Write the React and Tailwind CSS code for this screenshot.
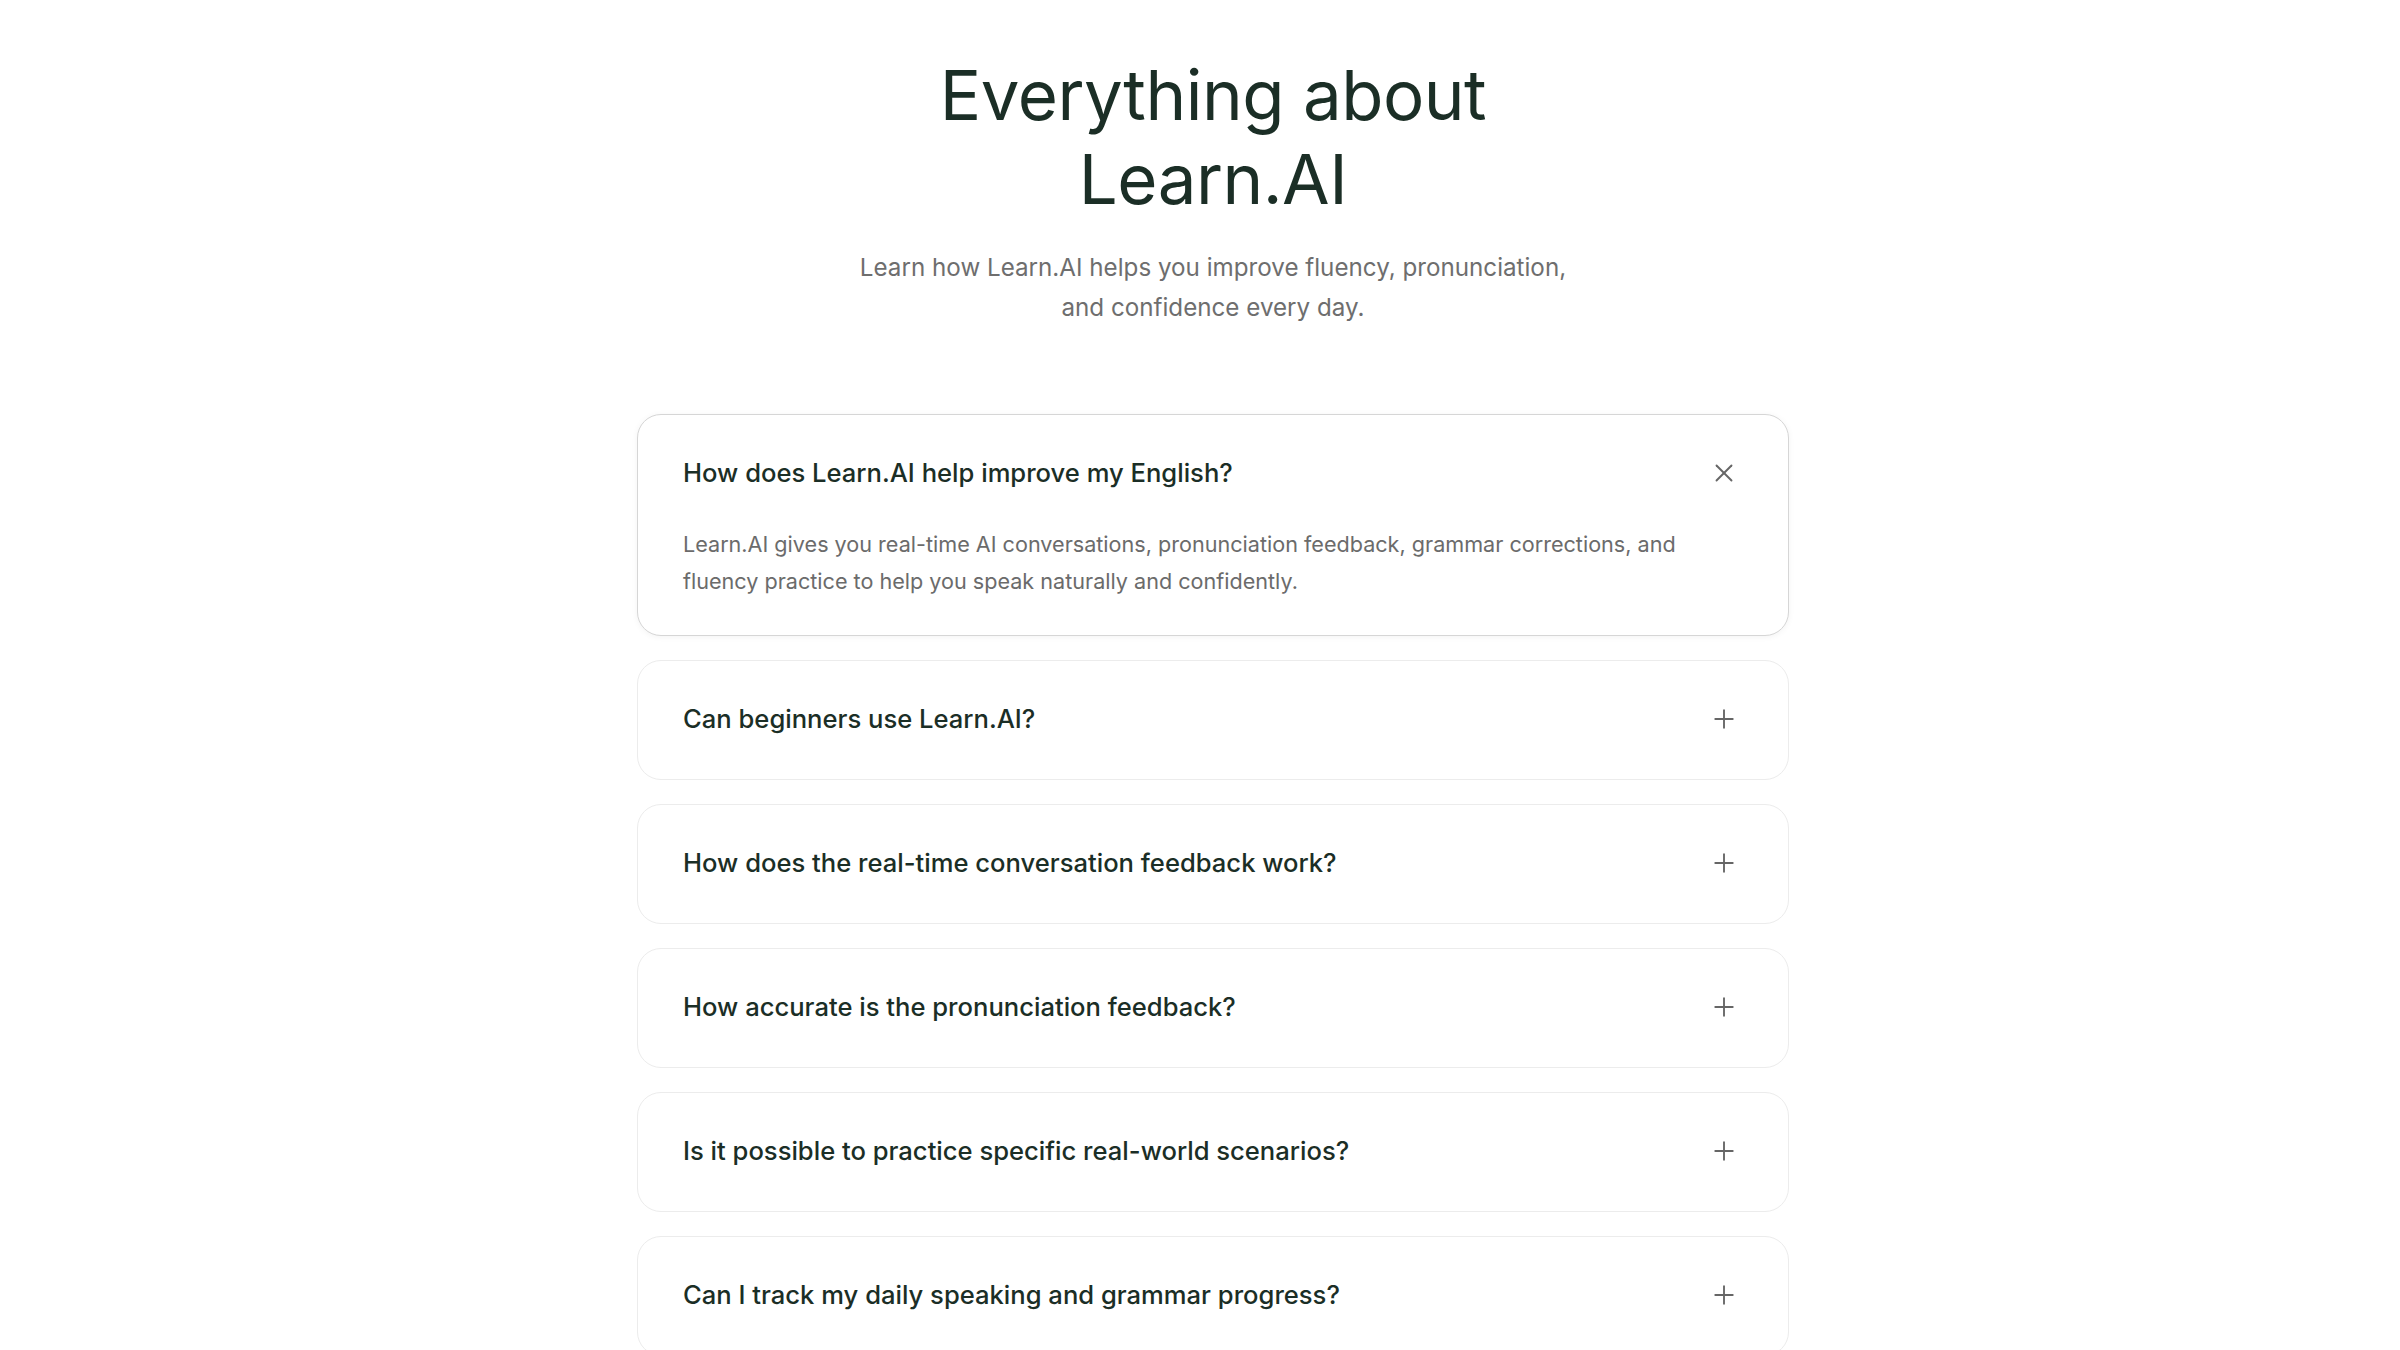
import { Plus, X } from "lucide-react";

const faqs = [
  {
    q: "How does Learn.AI help improve my English?",
    a: "Learn.AI gives you real-time AI conversations, pronunciation feedback, grammar corrections, and fluency practice to help you speak naturally and confidently.",
  },
  { q: "Can beginners use Learn.AI?" },
  { q: "How does the real-time conversation feedback work?" },
  { q: "How accurate is the pronunciation feedback?" },
  { q: "Is it possible to practice specific real-world scenarios?" },
  { q: "Can I track my daily speaking and grammar progress?" },
];

function FaqItem({ item, open }) {
  return (
    <div
      className={
        open
          ? "w-full rounded-[24px] border border-[#d6d6d6] bg-white shadow-[0_1px_6px_rgba(0,0,0,0.05)] pl-[45px] pr-[49px] pt-[41px] pb-[35px]"
          : "w-full rounded-[24px] border border-[#ececec] bg-white pl-[45px] pr-[49px] pt-[41px] pb-[43px]"
      }
    >
      <div className="flex items-center justify-between">
        <h3 className="text-[25.6px] leading-[34px] font-medium text-[#1b2e26]">{item.q}</h3>
        {open ? (
          <X className="w-[30px] h-[30px] text-[#666666]" strokeWidth={1.5} />
        ) : (
          <Plus className="w-[30px] h-[30px] text-[#666666]" strokeWidth={1.5} />
        )}
      </div>
      {open && (
        <p className="mt-[36px] max-w-[1010px] text-[21.6px] leading-[37px] text-[#6b6b6b]">
          {item.a}
        </p>
      )}
    </div>
  );
}

export default function App() {
  return (
    <div
      className="min-h-screen bg-white flex flex-col items-center pl-[26px] pt-[53px]"
      style={{ fontFamily: "Inter, 'Noto Sans', sans-serif" }}
    >
      <h1 className="text-center text-[69px] leading-[84px] font-normal text-[#1b2e26] tracking-[-0.5px]">
        Everything about
        <br />
        Learn.AI
      </h1>
      <p className="mt-[27px] text-center text-[24.2px] leading-[40px] text-[#6e6e6e]">
        Learn how Learn.AI helps you improve fluency, pronunciation,
        <br />
        and confidence every day.
      </p>

      <div className="mt-[86px] w-[1152px] flex flex-col gap-[24px]">
        {faqs.map((item, i) => (
          <FaqItem key={item.q} item={item} open={i === 0} />
        ))}
      </div>
    </div>
  );
}
